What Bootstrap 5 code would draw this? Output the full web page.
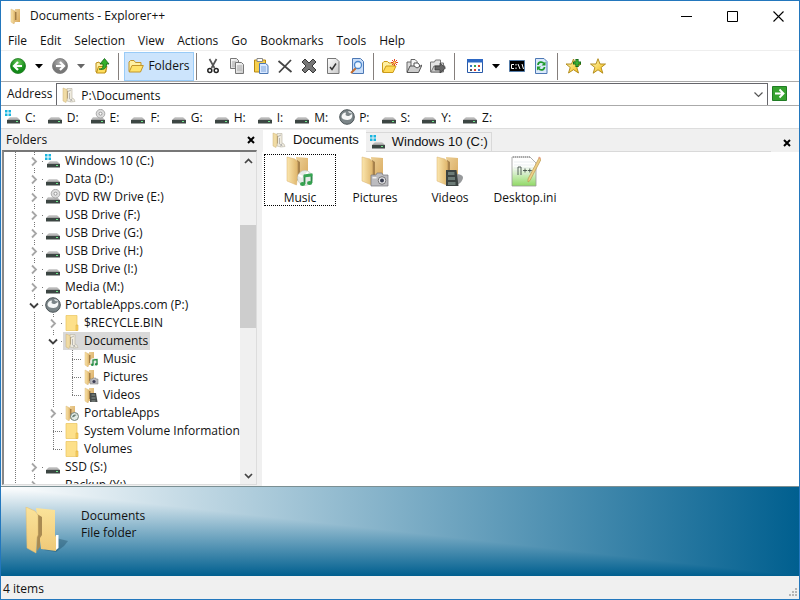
<!DOCTYPE html>
<html lang="en">
<head>
<meta charset="utf-8">
<meta name="viewport" content="width=device-width, initial-scale=1">
<title>Documents - Explorer++</title>
<link href="https://cdn.jsdelivr.net/npm/bootstrap@5.3.0/dist/css/bootstrap.min.css" rel="stylesheet">
<style>
  body { font: 12px/18px "Open Sans", "Noto Sans", sans-serif; color: #111; background: #fff; }
  svg { display: block; flex: none; }
  button { border: 0; background: transparent; color: inherit; padding: 0; }
  .window { border: 1px solid #2377bd; }
  .i16 { width: 16px; height: 16px; }
  .titlebar { height: 30px; padding-left: 8px; gap: 5px; }
  .winbtn { width: 41px; height: 30px; display: flex; align-items: center; justify-content: center; }
  .menus { height: 18px; padding: 2px 0 0 7px; gap: 13px; margin-bottom: 1px; }
  .menus a, .drives a { color: #111; text-decoration: none; }
  .tools { height: 32px; border-top: 1px solid #eee; border-bottom: 1px solid #aaa; padding-left: 5px; }
  .tool { width: 24px; height: 28px; display: flex; align-items: center; justify-content: center; }
  .drop { width: 18px; }
  .rule { width: 1px; height: 27px; background: #857f7c; }
  .tool-folders { width: 70px; height: 29px; background: #cce4fc; border: 1px solid #99cbf7; gap: 4px; margin: 0 2px 0 5px; }
  .address { height: 24px; border-bottom: 1px solid #aaa; padding-left: 6px; }
  .address-box { border: 1px solid #66666b; border-bottom: 0; height: 22px; margin-top: 1px; }
  .address-box input { border: 0; outline: 0; min-width: 0; padding: 2px 4px 0; height: 20px; color: #111; }
  .drives { height: 23px; border-bottom: 1px solid #ddd; padding: 2px 0 0 4px; gap: 11px; }
  .drives a { gap: 4px; }
  .side { width: 261px; background: #f0f0f0; }
  .pane-head { height: 21px; padding: 0 3px 0 5px; }
  .tree-box { border: 1px solid #828282; border-width: 2px 1px 1px 2px; border-color: #777 #ddd #ddd #888; margin: 0 5px 1px 1px; }
  .tree { background: #fff; margin: 0; }
  .node { height: 18px; padding-left: 2px; display: flex; white-space: nowrap; }
  .guide { width: 19px; flex: none; display: flex; align-items: center; justify-content: center;
    --dots: repeating-linear-gradient(#777 0 1px, transparent 1px 2px);
    --dash: repeating-linear-gradient(90deg, #777 0 1px, transparent 1px 2px); }
  .line { background: var(--dots) 9px 0 / 1px 18px no-repeat; }
  .leaf { background: var(--dots) 9px 0 / 1px 18px no-repeat, var(--dash) 9px 9px / 10px 1px no-repeat; }
  .last { background: var(--dots) 9px 0 / 1px 10px no-repeat, var(--dash) 9px 9px / 10px 1px no-repeat; }
  .guide svg { background: #fff; width: 13px; height: 11px; }
  .label { display: flex; align-items: center; gap: 4px; padding: 0 2px 0 1px; line-height: 16px; }
  .chosen { background: #d9d9d9; }
  .scroll { width: 16px; background: #f0f0f0; }
  .scroll button { height: 17px; display: flex; align-items: center; justify-content: center; }
  .thumb { background: #cdcdcd; flex: 104 1 0; }
  .gap-before { flex: 56 1 0; }
  .gap-after { flex: 139 1 0; }
  .tabs { height: 23px; background: #f0f0f0; padding-left: 1px; }
  .doc-tab { font: 13px/18px "Liberation Sans", Arial, sans-serif; display: flex; align-items: center; gap: 6px; white-space: nowrap; }
  .tab-on { background: #fff; padding: 0 7px 2px 8px; height: 22px; }
  .tab-off { border: 1px solid #d9d9d9; border-left: 0; height: 20px; padding: 0 3px 0 4px; margin-top: 3px; }
  .tab-fill { border-bottom: 1px solid #d9d9d9; }
  .files { padding: 2px 2px; gap: 3px; }
  .file { width: 72px; height: 52px; border: 1px dotted transparent; gap: 2px; }
  .file svg { width: 32px; height: 32px; }
  .file.focused { border-color: #000; }
  .details { height: 90px; border-top: 1px solid #7b8f93; padding: 20px 0 0 20px; gap: 8px; line-height: 17px;
    background: linear-gradient(90deg, #fff, #005f8f), linear-gradient(#fff, #005f8f); background-blend-mode: darken; }
  .status { height: 23px; background: #f0f0f0; padding: 2px 0 0 2px; }
</style>
<script src="https://cdn.jsdelivr.net/npm/bootstrap@5.3.0/dist/js/bootstrap.bundle.min.js"></script>
</head>
<body>
<svg width="0" height="0" class="position-absolute" aria-hidden="true">
  <defs>
    <linearGradient id="gold" x2="1" y2="0"><stop stop-color="#fbe6ae"/><stop offset="1" stop-color="#dfb66c"/></linearGradient>
    <linearGradient id="gold2" x2="1" y2="1"><stop stop-color="#ecd098"/><stop offset="1" stop-color="#d9a95c"/></linearGradient>
    <linearGradient id="sun" x2="0" y2="1"><stop stop-color="#fbe39a"/><stop offset="1" stop-color="#efc978"/></linearGradient>
    <linearGradient id="steel" x2="0" y2="1"><stop stop-color="#dadada"/><stop offset="1" stop-color="#999"/></linearGradient>
    <radialGradient id="green" cy=".3"><stop stop-color="#6fce5e"/><stop offset="1" stop-color="#128a18"/></radialGradient>
    <radialGradient id="grey" cy=".3"><stop stop-color="#b4b4b4"/><stop offset="1" stop-color="#777"/></radialGradient>
    <linearGradient id="star" x2="1" y2="1"><stop stop-color="#fffbc0"/><stop offset="1" stop-color="#f2b90c"/></linearGradient>
    <linearGradient id="lime" x2="0" y2="1"><stop offset=".3" stop-color="#fff"/><stop offset="1" stop-color="#8fd865"/></linearGradient>
    <linearGradient id="sheet" x2="1" y2="1"><stop stop-color="#fff"/><stop offset="1" stop-color="#c8c8c8"/></linearGradient>
  </defs>
  <symbol id="drive" viewBox="0 0 16 16"><path d="M4 8h8l3 3H1z" fill="url(#steel)"/><path d="M1 11h14v3.500H1z" fill="#3c4643"/><path d="M11 12h2v1h-2z" fill="#6ee88b"/></symbol>
  <symbol id="windrive" viewBox="0 0 16 16"><path d="M0 1h2.500v2.500H0zM3.500 1H6v2.500H3.500zM0 4.500h2.500V7H0zM3.500 4.500H6V7H3.500z" fill="#18b5e0"/><path d="M5 8h7l3 3H2z" fill="url(#steel)"/><path d="M2 11h13v3.500H2z" fill="#3c4643"/><path d="M11 12h2v1h-2z" fill="#6ee88b"/></symbol>
  <symbol id="dvd" viewBox="0 0 16 16"><path d="M3 8h9l3 3H1z" fill="url(#steel)"/><path d="M1 11h14v3.500H1z" fill="#3c4643"/><path d="M11 12h2v1h-2z" fill="#6ee88b"/><circle cx="10.500" cy="4.700" r="4.300" fill="#ddd" stroke="#999" stroke-width=".8"/><circle cx="10.500" cy="4.700" r="1.500" fill="#fff" stroke="#888" stroke-width=".8"/></symbol>
  <symbol id="papps" viewBox="0 0 16 16"><circle cx="8" cy="8" r="7.300" fill="#7b8588" stroke="#4c5558"/><path d="M2.500 8c0-2.500 2-4.500 4.500-4.500L6.500 6c2 2 4 1 6.500-1 1 3-1 6-4.500 6S3 10 2.500 8z" fill="#f6f8f8"/><path d="M9 2c2 0 4 1 4.500 2.500L10 4z" fill="#d6dcdd"/></symbol>
  <symbol id="folder" viewBox="0 0 16 16"><path d="M2 .5h11v15H2z" fill="#fde08a" stroke="#e9c35c" stroke-width=".7"/><path d="M12 10h2v5.500h-2z" fill="#f9d261" stroke="#ddb044" stroke-width=".6"/></symbol>
  <symbol id="open" viewBox="0 0 16 16"><path d="M6 1h5v13H6z" fill="url(#gold2)"/><path d="M2 1l4 2v10l-1 3-3-2z" fill="url(#gold)" stroke="#d5ad68" stroke-width=".4"/><path d="M6 4h1.500v8H6z" fill="#a17c45"/></symbol>
  <symbol id="docs" viewBox="0 0 16 16"><path d="M6 1.500h5V11l2 1 1 2.500-4 .5-4-1z" fill="#f0ecdf" stroke="#b9b3a2" stroke-width=".6"/><path d="M7 4.500l3-1.500M8.500 6v6l3 2M11 11.500l-1.500 3" fill="none" stroke="#aaa" stroke-width=".8"/><path d="M2 1l4 1.500V12l-1 3.500L2 14z" fill="#f0dba4" stroke="#cdb378" stroke-width=".5"/><path d="M6 4h1v7.500H6z" fill="#b4a17a"/></symbol>
  <symbol id="music" viewBox="0 0 16 16"><use href="#open"/><circle cx="11" cy="11" r="4" fill="#e5ebe4"/><path d="M10 13.500V9l4-.5V13" fill="none" stroke="#258d45" stroke-width="1.300"/><circle cx="9.300" cy="13.800" r="1.300" fill="#258d45"/><circle cx="13.300" cy="13.300" r="1.300" fill="#258d45"/></symbol>
  <symbol id="pics" viewBox="0 0 16 16"><use href="#open"/><path d="M7 10h2l1-1h3v1h2v5H7z" fill="#b9b9be" stroke="#777" stroke-width=".5"/><circle cx="11" cy="12.500" r="1.600" fill="#3b3b52"/></symbol>
  <symbol id="vids" viewBox="0 0 16 16"><use href="#open"/><path d="M7 6h6l1.500 9H7z" fill="#474b4a"/><path d="M8.500 8h3.500M8.500 11h4M8.500 14h4" stroke="#8c9892"/></symbol>
  <symbol id="appsfolder" viewBox="0 0 16 16"><use href="#open"/><circle cx="10.500" cy="11.500" r="4" fill="#e2ebe5" stroke="#718078"/><path d="M8 12c1-3 3-3 5-2-2 0-2 3-5 2z" fill="#6c8077"/></symbol>
  <symbol id="bigfolder" viewBox="0 0 32 32"><path d="M12 2l12 1v24l-10-1z" fill="url(#gold2)"/><path d="M13 5l3 2v15l-3 4z" fill="#a7824c"/><path d="M3 2l8 2 2.500 3v15l-1 8L3 26z" fill="url(#gold)" stroke="#d8b06c" stroke-width=".5"/></symbol>
  <symbol id="bigmusic" viewBox="0 0 32 32"><use href="#bigfolder"/><circle cx="21" cy="23" r="7.500" fill="#e6eae7" stroke="#bfc8c2" stroke-width=".6"/><path d="M14.500 20l4 2M24 17l-3 4" stroke="#fff" stroke-width="2"/><path d="M20.500 29v-8l7-1v8" fill="none" stroke="#2c8d48" stroke-width="1.800"/><path d="M19.700 19.500l8.700-1.200v3l-8.700 1.200z" fill="#36a653"/><ellipse cx="18.600" cy="29" rx="2.600" ry="2" fill="#35a24f"/><ellipse cx="25.600" cy="28" rx="2.600" ry="2" fill="#35a24f"/></symbol>
  <symbol id="bigpics" viewBox="0 0 32 32"><use href="#bigfolder"/><path d="M12 20h5l1-2h5l1 2h5v11H12z" fill="#bcbcc0" stroke="#77777c" stroke-width=".7"/><circle cx="23" cy="25.500" r="3.800" fill="#e6e6ea" stroke="#777"/><circle cx="23" cy="25.500" r="2" fill="#3b4052"/><path d="M13.500 22h4v1.500h-4z" fill="#f2f2f2"/></symbol>
  <symbol id="bigvids" viewBox="0 0 32 32"><use href="#bigfolder"/><path d="M21 19c5 0 8 1 8 4-1 4-4 7-8 7z" fill="#97999b"/><path d="M12 15h10.500l2 16H12z" fill="#3b4341"/><path d="M14 17h6.500v3H14zM14 22h7v3h-7zM14 27h7.500v3H14z" fill="#6d7c77"/></symbol>
  <symbol id="ini" viewBox="0 0 32 32"><path d="M3 2h18l6 6v23H3z" fill="url(#lime)" stroke="#9a9a9a" stroke-width=".8"/><path d="M4 2h17" stroke="#777" stroke-dasharray="1 1"/><path d="M5 7h20M5 10h20M5 13h20M5 16h20M5 19h20" stroke="#d4dde2" stroke-width=".5"/><path d="M9 20v-8h3v8M14 15.500h4M16 13.500v4M18.800 15.500h4M20.800 13.500v4" fill="none" stroke="#46544b" stroke-width=".9"/><path d="M30 3l2 1.500-11 21-2 1.500V24z" fill="#efcf86" stroke="#b9984f" stroke-width=".7"/><path d="M30 1.500l2 1.500-.8 1.500-2-1.500z" fill="#e5a080"/></symbol>
  <symbol id="yfolder" viewBox="0 0 16 16"><path d="M1 13.500V4L2.500 2.500H6L7.500 4.500H13V7" fill="#fff0a2" stroke="#c2952a"/><path d="M1.200 14 4 7.500h11.300L12.500 14z" fill="#ffe36b" stroke="#c2952a"/></symbol>
  <symbol id="down" viewBox="0 0 8 5"><path d="M0 0h8L4 4.500z"/></symbol>
  <symbol id="shut" viewBox="0 0 13 11"><path d="M4 1.500 8 5.500l-4 4" fill="none" stroke="#a6a6a6" stroke-width="1.800"/></symbol>
  <symbol id="spread" viewBox="0 0 13 11"><path d="M2 3.500 6 7.500l4-4" fill="none" stroke="#404040" stroke-width="1.800"/></symbol>
  <symbol id="cross" viewBox="0 0 8 8"><path d="M1 1l6 6M7 1 1 7" stroke="#000" stroke-width="2"/></symbol>
</svg>

<div class="window vh-100 d-flex flex-column overflow-hidden">
  <header class="titlebar d-flex align-items-center flex-shrink-0">
    <svg class="i16"><use href="#open"/></svg>
    <span class="flex-grow-1">Documents - Explorer++</span>
    <button class="winbtn" aria-label="Minimize"><svg width="11" height="11"><path d="M0 5.500h11" stroke="#000"/></svg></button>
    <button class="winbtn" aria-label="Maximize"><svg width="11" height="11"><path d="M.5.5h10v10H.5z" fill="none" stroke="#000"/></svg></button>
    <button class="winbtn" aria-label="Close"><svg width="11" height="11"><path d="M.5.5l10 10M10.500.5l-10 10" stroke="#000" stroke-width="1.100"/></svg></button>
  </header>
  <nav class="menus d-flex align-items-center flex-shrink-0" aria-label="Menu">
    <a href="#">File</a><a href="#">Edit</a><a href="#">Selection</a><a href="#">View</a><a href="#">Actions</a><a href="#">Go</a><a href="#">Bookmarks</a><a href="#">Tools</a><a href="#">Help</a>
  </nav>
  <div class="tools d-flex align-items-center flex-shrink-0" role="toolbar">
    <button class="tool" aria-label="Back"><svg class="i16" viewBox="0 0 16 16"><circle cx="8" cy="8" r="7.500" fill="url(#green)" stroke="#217b22" stroke-width=".8"/><path d="M8 4 4 8l4 4M4.500 8H12" fill="none" stroke="#fff" stroke-width="2.200"/></svg></button>
    <button class="tool drop" aria-label="Back history"><svg width="8" height="5"><use href="#down"/></svg></button>
    <button class="tool" aria-label="Forward"><svg class="i16" viewBox="0 0 16 16"><circle cx="8" cy="8" r="7.500" fill="url(#grey)" stroke="#777" stroke-width=".8"/><path d="M8 4l4 4-4 4M11.500 8H4" fill="none" stroke="#fff" stroke-width="2.200"/></svg></button>
    <button class="tool drop" aria-label="Forward history"><svg width="8" height="5" fill="#666"><use href="#down"/></svg></button>
    <button class="tool" aria-label="Up"><svg class="i16" viewBox="0 0 16 16"><path d="M2 14V5l3-1 1 1.500h6V14z" fill="#fff0a2" stroke="#bd8e16"/><path d="M2.500 15l2-6.500H13l-2 6.500z" fill="#ffdf5d" stroke="#bd8e16"/><path d="M5 11c4 0 4-2 4-5H6l4.500-5.500L15 6h-2.500c0 4-2 6.500-7.500 5z" fill="#35b12c" stroke="#14641a" stroke-width=".8"/></svg></button>
    <span class="rule ms-1"></span>
    <button class="tool tool-folders" aria-pressed="true"><svg class="i16"><use href="#yfolder"/></svg>Folders</button>
    <span class="rule me-1"></span>
    <button class="tool" aria-label="Cut"><svg class="i16" viewBox="0 0 16 16"><path d="M4.500 1l5 9M11.500 1l-5 9" stroke="#555" stroke-width="1.700"/><circle cx="4.800" cy="12.500" r="2" fill="none" stroke="#222" stroke-width="1.500"/><circle cx="11.200" cy="12.500" r="2" fill="none" stroke="#222" stroke-width="1.500"/></svg></button>
    <button class="tool" aria-label="Copy"><svg class="i16" viewBox="0 0 16 16"><path d="M1.500.5h6l2 2v8h-8z" fill="url(#sheet)" stroke="#777"/><path d="M3 4h4M3 6h4M3 8h4" stroke="#aaa"/><path d="M6.500 4.500h6l2 2v9h-8z" fill="url(#sheet)" stroke="#777"/><path d="M8 8h5M8 10h5M8 12h5" stroke="#aaa"/></svg></button>
    <button class="tool" aria-label="Paste"><svg class="i16" viewBox="0 0 16 16"><path d="M1.500 2h11v12h-11z" fill="#f7d04e" stroke="#b78911"/><path d="M4 .5h5.500v3H4z" fill="#fff" stroke="#888"/><path d="M6.500 5.500h6l2.500 2v8H6.500z" fill="#d9e8ff" stroke="#4d78b4"/><path d="M8 9h5M8 11h5M8 13h5" stroke="#7da4da"/></svg></button>
    <button class="tool" aria-label="Delete"><svg class="i16" viewBox="0 0 16 16"><path d="M1.500 3 14.500 14M14 2 2 14.500" stroke="#444" stroke-width="1.800"/></svg></button>
    <button class="tool" aria-label="Delete permanently"><svg class="i16" viewBox="0 0 16 16"><path d="M1 4l3-3 4 4 4-4 3 3-4 4 4 4-3 3-4-4-4 4-3-3 4-4z" fill="#777" stroke="#383838"/></svg></button>
    <button class="tool" aria-label="Properties"><svg class="i16" viewBox="0 0 16 16"><path d="M2.500.5h8.500l3 3v12H2.500z" fill="url(#sheet)" stroke="#777"/><path d="M5 9l2 2.500 4-6" fill="none" stroke="#333" stroke-width="1.500"/></svg></button>
    <button class="tool" aria-label="Search"><svg class="i16" viewBox="0 0 16 16"><path d="M3.500.5h8l3 3v12h-11z" fill="#c9def9" stroke="#4d78b4"/><path d="M7 10l-5 5" stroke="#c56c2e" stroke-width="2"/><circle cx="9" cy="7" r="3.500" fill="#eef7ff" stroke="#4c87cc" stroke-width="1.300"/></svg></button>
    <span class="rule mx-1"></span>
    <button class="tool" aria-label="New folder"><svg class="i16" viewBox="0 0 16 16"><path d="M.5 14V5L2 3.500h3.500L7 5h5v3" fill="#fff0a2" stroke="#cc9b19"/><path d="M.8 14.500 4 8h10l-3 6.500z" fill="#ffda57" stroke="#cc9b19"/><path d="M12.500 1v7M9 4.500h7M10 2l5 5M15 2l-5 5" stroke="#e34422"/><circle cx="12.500" cy="4.500" r="1.200" fill="#ffe16a"/></svg></button>
    <button class="tool" aria-label="Copy to"><svg class="i16" viewBox="0 0 16 16"><path d="M1 4h4l1 1h5v9H1z" fill="#ddd" stroke="#666"/><path d="M5 1.500h4l2 2V9H5z" fill="#f5f5f5" stroke="#666"/><path d="M8 5h4l1.500 2v5H8z" fill="#fff" stroke="#555"/><path d="M1 14.500 4 8h4l3 2 5-3-3.500 7.500z" fill="#ccc" stroke="#555"/></svg></button>
    <button class="tool" aria-label="Move to"><svg class="i16" viewBox="0 0 16 16"><path d="M.5 14V4h4l1-2h5v3h3v9z" fill="#e4e4e4" stroke="#777"/><path d="M1 14l3-6h11l-3 6z" fill="#ccc" stroke="#777"/><path d="M5 8h5V5l5.500 5-5.500 5v-3H5z" fill="#666" stroke="#333" stroke-width=".7"/></svg></button>
    <span class="rule ms-1 me-2"></span>
    <button class="tool" aria-label="Views"><svg class="i16" viewBox="0 0 16 16"><path d="M.5 1.500h15v13H.5z" fill="#fff" stroke="#2859a8"/><path d="M0 1h16v3.500H0z" fill="#2d68c4"/><path d="M3 7h2v2H3zM11 11h2v2h-2z" fill="#3a76c9"/><path d="M7 7h2v2H7z" fill="#35a04f"/><path d="M11 7h2v2h-2zM7 11h2v2H7z" fill="#dd4030"/><path d="M3 11h2v2H3z" fill="#555"/></svg></button>
    <button class="tool drop" aria-label="Choose view"><svg width="8" height="5"><use href="#down"/></svg></button>
    <button class="tool" aria-label="Command prompt"><svg class="i16" viewBox="0 0 16 16"><path d="M.5 2.500h15v11H.5z" stroke="#557ca8"/><path d="M5 6.500H2.500v4H5M7 6v1.500M7 9.500V11M9 6l2 5M13 6l1.500 5" fill="none" stroke="#fff"/></svg></button>
    <button class="tool" aria-label="Refresh"><svg class="i16" viewBox="0 0 16 16"><path d="M2.500.5h8.500l3 3v12H2.500z" fill="#dbe9fb" stroke="#4d78b4"/><path d="M5 7c0-3 4-4 6-1.500M11.500 9c0 3-4 4-6 1.500" fill="none" stroke="#1e9a2c" stroke-width="1.700"/><path d="M12.500 3.500v4H8.500zM4 12.500v-4h4z" fill="#1e9a2c"/></svg></button>
    <span class="rule mx-1"></span>
    <button class="tool" aria-label="Add bookmark"><svg class="i16" viewBox="0 0 16 16"><path d="M7.500 1l2 5H15l-4.200 3.500 1.700 5.500-5-3.300-5 3.300 1.700-5.500L0 6h5.500z" fill="url(#star)" stroke="#ad8413" stroke-width=".9"/><path d="M11 1v8M7 5h8" stroke="#176e1b" stroke-width="3.200"/><path d="M11 2v6M8 5h6" stroke="#49c43e" stroke-width="1.200"/></svg></button>
    <button class="tool" aria-label="Bookmarks"><svg class="i16" viewBox="0 0 16 16"><path d="M8 .7l2 5.300h5.500l-4.400 3.500 1.700 5.700L8 11.800l-4.800 3.400 1.700-5.700L.5 6H6z" fill="url(#star)" stroke="#ad8413" stroke-width=".9"/></svg></button>
  </div>
  <div class="address d-flex flex-shrink-0">
    <label for="path" class="pe-1 pt-1 lh-sm">Address</label>
    <div class="address-box d-flex align-items-center flex-grow-1">
      <svg class="i16 ms-1"><use href="#docs"/></svg>
      <input id="path" class="flex-grow-1" type="text" value="P:\Documents">
      <button class="px-1" aria-label="Show addresses"><svg width="9" height="6"><path d="M.5.5l4 4 4-4" fill="none" stroke="#555" stroke-width="1.200"/></svg></button>
    </div>
    <button class="ps-1 pe-2 me-1 d-flex align-items-center" aria-label="Go"><svg width="15" height="15"><path d="M.5.500h14v14H.5z" fill="#36a22f" stroke="#207c24"/><path d="M7.500 3.500l4 4-4 4M11 7.500H3" fill="none" stroke="#fff" stroke-width="1.900"/></svg></button>
  </div>
  <nav class="drives d-flex align-items-center flex-shrink-0" aria-label="Drives">
    <a class="d-flex" href="#"><svg class="i16"><use href="#windrive"/></svg>C:</a>
    <a class="d-flex" href="#"><svg class="i16"><use href="#drive"/></svg>D:</a>
    <a class="d-flex" href="#"><svg class="i16"><use href="#dvd"/></svg>E:</a>
    <a class="d-flex" href="#"><svg class="i16"><use href="#drive"/></svg>F:</a>
    <a class="d-flex" href="#"><svg class="i16"><use href="#drive"/></svg>G:</a>
    <a class="d-flex" href="#"><svg class="i16"><use href="#drive"/></svg>H:</a>
    <a class="d-flex" href="#"><svg class="i16"><use href="#drive"/></svg>I:</a>
    <a class="d-flex" href="#"><svg class="i16"><use href="#drive"/></svg>M:</a>
    <a class="d-flex" href="#"><svg class="i16"><use href="#papps"/></svg>P:</a>
    <a class="d-flex" href="#"><svg class="i16"><use href="#drive"/></svg>S:</a>
    <a class="d-flex" href="#"><svg class="i16"><use href="#drive"/></svg>Y:</a>
    <a class="d-flex" href="#"><svg class="i16"><use href="#drive"/></svg>Z:</a>
  </nav>
  <div class="d-flex flex-fill overflow-hidden">
    <aside class="side d-flex flex-column flex-shrink-0">
      <div class="pane-head d-flex align-items-center justify-content-between flex-shrink-0">Folders<button class="px-1" aria-label="Close folders"><svg width="8" height="8"><use href="#cross"/></svg></button></div>
      <div class="tree-box d-flex flex-fill overflow-hidden">
        <ul class="tree list-unstyled flex-fill overflow-hidden">
          <li class="node"><span class="guide line"></span><span class="guide leaf"><svg><use href="#shut"/></svg></span><span class="label"><svg class="i16"><use href="#windrive"/></svg>Windows 10 (C:)</span></li>
          <li class="node"><span class="guide line"></span><span class="guide leaf"><svg><use href="#shut"/></svg></span><span class="label"><svg class="i16"><use href="#drive"/></svg>Data (D:)</span></li>
          <li class="node"><span class="guide line"></span><span class="guide leaf"><svg><use href="#shut"/></svg></span><span class="label"><svg class="i16"><use href="#dvd"/></svg>DVD RW Drive (E:)</span></li>
          <li class="node"><span class="guide line"></span><span class="guide leaf"><svg><use href="#shut"/></svg></span><span class="label"><svg class="i16"><use href="#drive"/></svg>USB Drive (F:)</span></li>
          <li class="node"><span class="guide line"></span><span class="guide leaf"><svg><use href="#shut"/></svg></span><span class="label"><svg class="i16"><use href="#drive"/></svg>USB Drive (G:)</span></li>
          <li class="node"><span class="guide line"></span><span class="guide leaf"><svg><use href="#shut"/></svg></span><span class="label"><svg class="i16"><use href="#drive"/></svg>USB Drive (H:)</span></li>
          <li class="node"><span class="guide line"></span><span class="guide leaf"><svg><use href="#shut"/></svg></span><span class="label"><svg class="i16"><use href="#drive"/></svg>USB Drive (I:)</span></li>
          <li class="node"><span class="guide line"></span><span class="guide leaf"><svg><use href="#shut"/></svg></span><span class="label"><svg class="i16"><use href="#drive"/></svg>Media (M:)</span></li>
          <li class="node"><span class="guide line"></span><span class="guide leaf"><svg><use href="#spread"/></svg></span><span class="label"><svg class="i16"><use href="#papps"/></svg>PortableApps.com (P:)</span></li>
          <li class="node"><span class="guide line"></span><span class="guide line"></span><span class="guide leaf"><svg><use href="#shut"/></svg></span><span class="label"><svg class="i16"><use href="#folder"/></svg>$RECYCLE.BIN</span></li>
          <li class="node"><span class="guide line"></span><span class="guide line"></span><span class="guide leaf"><svg><use href="#spread"/></svg></span><span class="label chosen"><svg class="i16"><use href="#docs"/></svg>Documents</span></li>
          <li class="node"><span class="guide line"></span><span class="guide line"></span><span class="guide line"></span><span class="guide leaf"></span><span class="label"><svg class="i16"><use href="#music"/></svg>Music</span></li>
          <li class="node"><span class="guide line"></span><span class="guide line"></span><span class="guide line"></span><span class="guide leaf"></span><span class="label"><svg class="i16"><use href="#pics"/></svg>Pictures</span></li>
          <li class="node"><span class="guide line"></span><span class="guide line"></span><span class="guide line"></span><span class="guide last"></span><span class="label"><svg class="i16"><use href="#vids"/></svg>Videos</span></li>
          <li class="node"><span class="guide line"></span><span class="guide line"></span><span class="guide leaf"><svg><use href="#shut"/></svg></span><span class="label"><svg class="i16"><use href="#appsfolder"/></svg>PortableApps</span></li>
          <li class="node"><span class="guide line"></span><span class="guide line"></span><span class="guide leaf"></span><span class="label"><svg class="i16"><use href="#folder"/></svg>System Volume Information</span></li>
          <li class="node"><span class="guide line"></span><span class="guide line"></span><span class="guide last"></span><span class="label"><svg class="i16"><use href="#folder"/></svg>Volumes</span></li>
          <li class="node"><span class="guide line"></span><span class="guide leaf"><svg><use href="#shut"/></svg></span><span class="label"><svg class="i16"><use href="#drive"/></svg>SSD (S:)</span></li>
          <li class="node"><span class="guide line"></span><span class="guide leaf"><svg><use href="#shut"/></svg></span><span class="label"><svg class="i16"><use href="#drive"/></svg>Backup (Y:)</span></li>
        </ul>
        <div class="scroll d-flex flex-column flex-shrink-0">
          <button aria-label="Scroll up"><svg width="9" height="6"><path d="M1 5l3.500-3.500L8 5" fill="none" stroke="#444" stroke-width="1.700"/></svg></button>
          <div class="gap-before"></div><div class="thumb"></div><div class="gap-after"></div>
          <button aria-label="Scroll down"><svg width="9" height="6"><path d="M1 1l3.500 3.500L8 1" fill="none" stroke="#444" stroke-width="1.700"/></svg></button>
        </div>
      </div>
    </aside>
    <main class="flex-fill overflow-hidden">
      <div class="tabs d-flex">
        <button class="doc-tab tab-on mt-auto"><svg class="i16"><use href="#docs"/></svg>Documents</button>
        <button class="doc-tab tab-off"><svg class="i16"><use href="#windrive"/></svg>Windows 10 (C:)</button>
        <div class="tab-fill flex-grow-1"></div>
        <button class="px-2 ms-1 pt-1" aria-label="Close tab"><svg width="8" height="8"><use href="#cross"/></svg></button>
      </div>
      <div class="files d-flex flex-wrap">
        <div class="file focused d-flex flex-column align-items-center"><svg><use href="#bigmusic"/></svg>Music</div>
        <div class="file d-flex flex-column align-items-center"><svg><use href="#bigpics"/></svg>Pictures</div>
        <div class="file d-flex flex-column align-items-center"><svg><use href="#bigvids"/></svg>Videos</div>
        <div class="file d-flex flex-column align-items-center"><svg><use href="#ini"/></svg>Desktop.ini</div>
      </div>
    </main>
  </div>
  <section class="details d-flex flex-shrink-0" aria-label="Details">
    <svg width="52" height="52" viewBox="0 0 52 52"><path d="M35 31l12 3-4 5-8 6-12-2z" fill="#17425a" opacity=".35"/><path d="M15 1l19 2v25l1 2v14l-15-2z" fill="url(#sun)"/><path d="M35 28h2.500v13l-2.500 2z" fill="#fff"/><path d="M16 7l5 3v18l-2 3v9l-3 4z" fill="#a98a52"/><path d="M5 0l9 4 3 4v20l-1 2-1 16L6 41z" fill="url(#sun)" stroke="#e3bd70" stroke-width=".5"/></svg>
    <div>Documents<br>File folder</div>
  </section>
  <footer class="status d-flex align-items-center justify-content-between flex-shrink-0">4 items
    <svg class="align-self-end" width="11" height="11" fill="#b5b5b5"><path d="M7 0h2v2H7zM4 3h2v2H4zM7 3h2v2H7zM1 6h2v2H1zM4 6h2v2H4zM7 6h2v2H7z"/></svg>
  </footer>
</div>
</body>
</html>
